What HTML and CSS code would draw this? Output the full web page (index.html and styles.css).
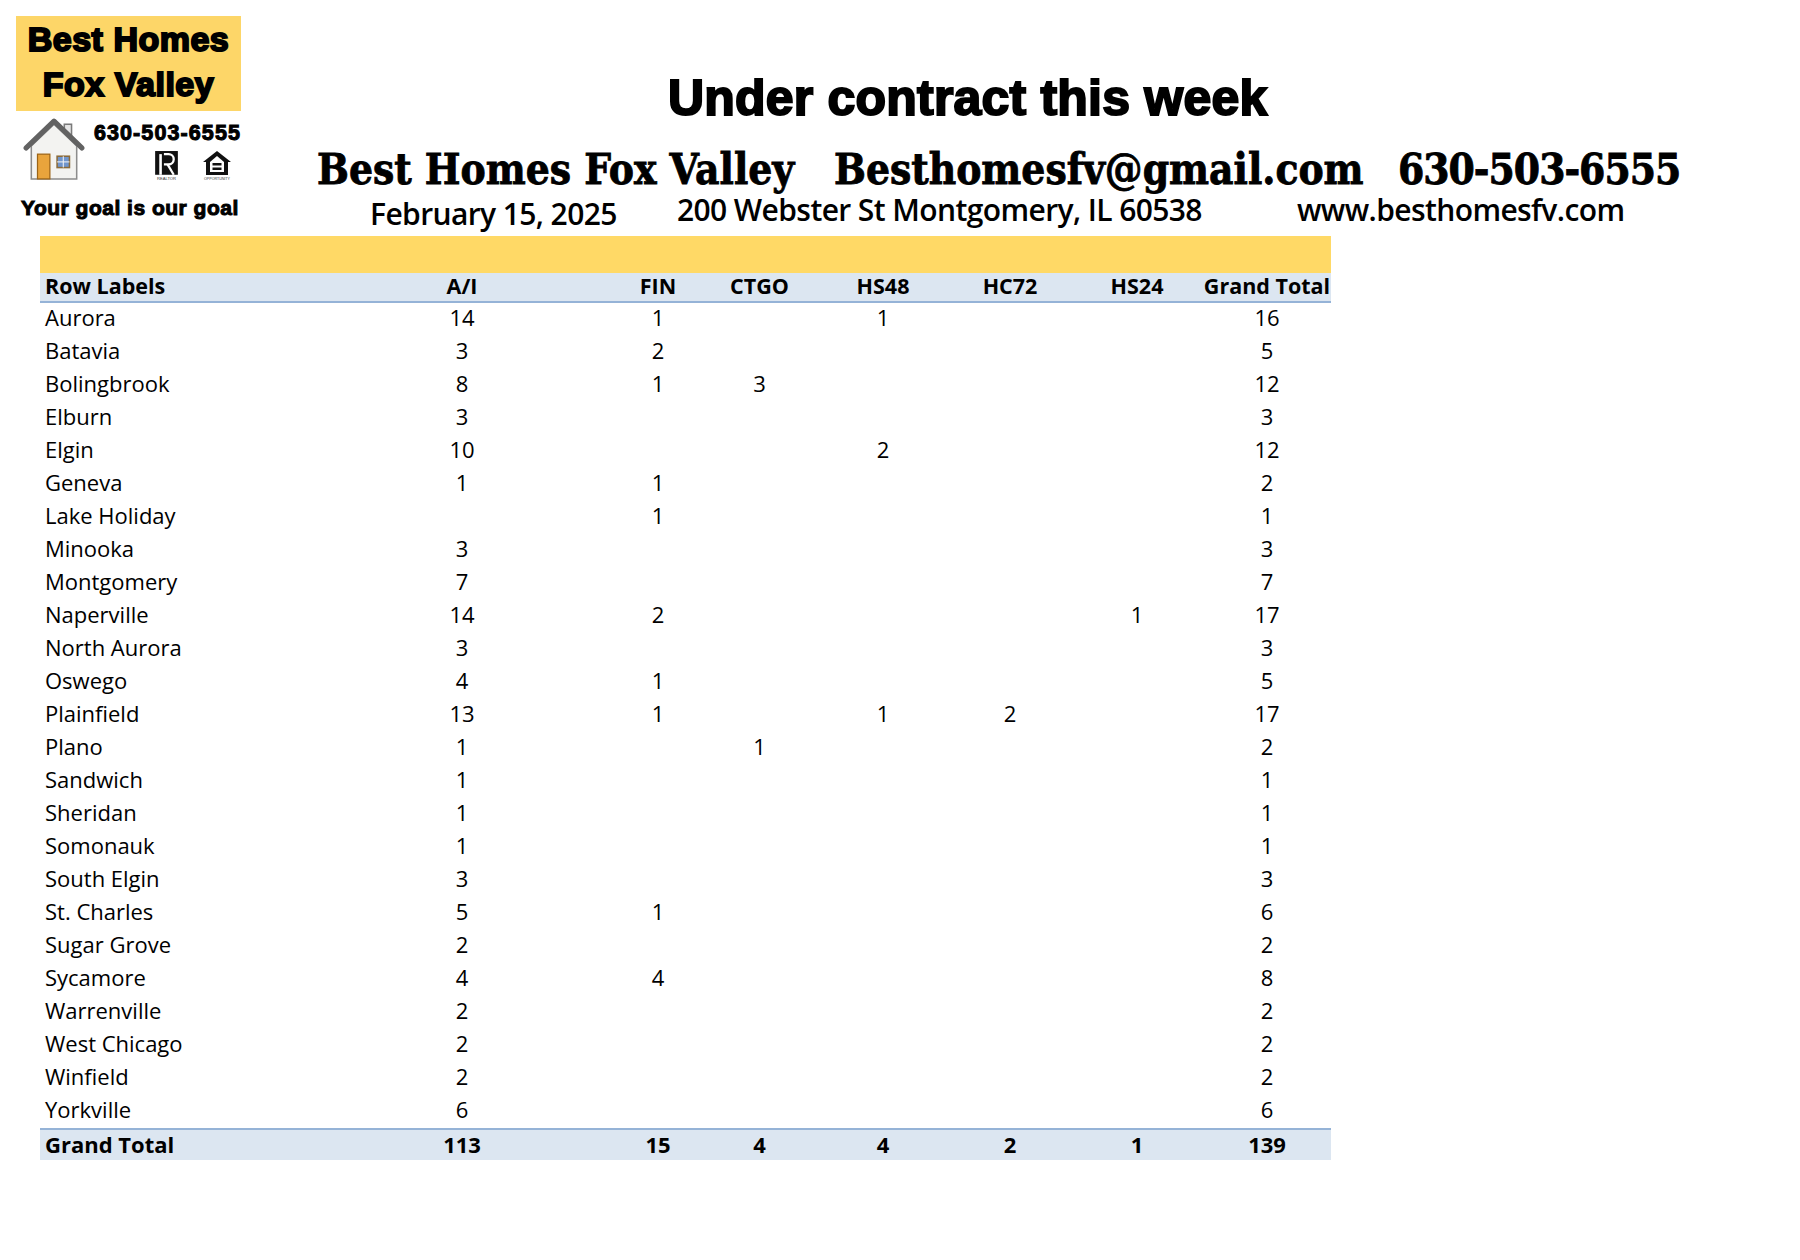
FILE: index.html
```html
<!DOCTYPE html>
<html lang="en">
<head>
<meta charset="utf-8">
<title>Under contract this week</title>
<link rel="stylesheet" href="styles.css">
</head>
<body>
<div class="page">
  <header class="top">
    <div class="logo">
      <div class="logo-box">
        <div class="logo-line">Best Homes</div>
        <div class="logo-line">Fox Valley</div>
      </div>
      <div class="logo-mid">
        <svg class="house" viewBox="0 0 60 64" width="62" height="66" aria-hidden="true">
          <rect x="40" y="8" width="7" height="15" fill="#e6e6e6" stroke="#7a7a7a" stroke-width="1.5"/>
          <polygon points="8,29 30,8 52,29 52,61 8,61" fill="#f3f3f1" stroke="#8c8c8c" stroke-width="1.5"/>
          <polyline points="3,31 30,5 57,31" fill="none" stroke="#626262" stroke-width="5" stroke-linejoin="round" stroke-linecap="round"/>
          <rect x="14" y="37" width="12" height="24" fill="#e9a43c" stroke="#9c6416" stroke-width="1.2"/>
          <rect x="33" y="39" width="12" height="11" fill="#7095cc" stroke="#8a6a3a" stroke-width="1.5"/>
          <line x1="39" y1="39" x2="39" y2="50" stroke="#f4f4f4" stroke-width="1"/>
          <line x1="33" y1="44.5" x2="45" y2="44.5" stroke="#f4f4f4" stroke-width="1"/>
        </svg>
        <div class="logo-right">
          <div class="logo-phone">630-503-6555</div>
          <div class="badges">
            <svg class="badge" viewBox="0 0 26 31" width="27" height="32" aria-hidden="true">
              <rect x="2" y="1" width="22" height="23" fill="#111"/>
              <rect x="6" y="4" width="2.5" height="20" fill="#fff"/>
              <path d="M10.5 4 H15 A5 5 0 0 1 15 14 H10.5" fill="none" stroke="#fff" stroke-width="2.2"/>
              <path d="M14 14 L20 24" stroke="#fff" stroke-width="2.2"/>
              <text x="13" y="29.5" font-size="4" text-anchor="middle" font-family="Liberation Sans, sans-serif" fill="#333">REALTOR</text>
            </svg>
            <svg class="badge" viewBox="0 0 30 31" width="30" height="31" aria-hidden="true">
              <polygon points="15,1 29,12 26,12 26,25 4,25 4,12 1,12" fill="#111"/>
              <polygon points="15,6 22,12 22,22 8,22 8,12" fill="#fff"/>
              <rect x="10.5" y="13" width="9" height="2.5" fill="#111"/>
              <rect x="10.5" y="17.5" width="9" height="2.5" fill="#111"/>
              <text x="15" y="30" font-size="3.6" text-anchor="middle" font-family="Liberation Sans, sans-serif" fill="#333">OPPORTUNITY</text>
            </svg>
          </div>
        </div>
      </div>
      <div class="logo-goal">Your goal is our goal</div>
    </div>
    <div class="heading">
      <h1 class="title">Under contract this week</h1>
      <div class="contact">
        <span class="c-name">Best Homes Fox Valley</span>
        <span class="c-mail">Besthomesfv@gmail.com</span>
        <span class="c-phone">630-503-6555</span>
      </div>
      <div class="subline">
        <span class="s-date">February 15, 2025</span>
        <span class="s-addr">200 Webster St Montgomery, IL 60538</span>
        <span class="s-web">www.besthomesfv.com</span>
      </div>
    </div>
  </header>

  <section class="pivot">
    <div class="band"></div>
    <div class="row head">
      <div class="lbl">Row Labels</div><div>A/I</div><div>FIN</div><div>CTGO</div><div>HS48</div><div>HC72</div><div>HS24</div><div>Grand Total</div>
    </div>
    <div class="row"><div class="lbl">Aurora</div><div>14</div><div>1</div><div></div><div>1</div><div></div><div></div><div>16</div></div>
    <div class="row"><div class="lbl">Batavia</div><div>3</div><div>2</div><div></div><div></div><div></div><div></div><div>5</div></div>
    <div class="row"><div class="lbl">Bolingbrook</div><div>8</div><div>1</div><div>3</div><div></div><div></div><div></div><div>12</div></div>
    <div class="row"><div class="lbl">Elburn</div><div>3</div><div></div><div></div><div></div><div></div><div></div><div>3</div></div>
    <div class="row"><div class="lbl">Elgin</div><div>10</div><div></div><div></div><div>2</div><div></div><div></div><div>12</div></div>
    <div class="row"><div class="lbl">Geneva</div><div>1</div><div>1</div><div></div><div></div><div></div><div></div><div>2</div></div>
    <div class="row"><div class="lbl">Lake Holiday</div><div></div><div>1</div><div></div><div></div><div></div><div></div><div>1</div></div>
    <div class="row"><div class="lbl">Minooka</div><div>3</div><div></div><div></div><div></div><div></div><div></div><div>3</div></div>
    <div class="row"><div class="lbl">Montgomery</div><div>7</div><div></div><div></div><div></div><div></div><div></div><div>7</div></div>
    <div class="row"><div class="lbl">Naperville</div><div>14</div><div>2</div><div></div><div></div><div></div><div>1</div><div>17</div></div>
    <div class="row"><div class="lbl">North Aurora</div><div>3</div><div></div><div></div><div></div><div></div><div></div><div>3</div></div>
    <div class="row"><div class="lbl">Oswego</div><div>4</div><div>1</div><div></div><div></div><div></div><div></div><div>5</div></div>
    <div class="row"><div class="lbl">Plainfield</div><div>13</div><div>1</div><div></div><div>1</div><div>2</div><div></div><div>17</div></div>
    <div class="row"><div class="lbl">Plano</div><div>1</div><div></div><div>1</div><div></div><div></div><div></div><div>2</div></div>
    <div class="row"><div class="lbl">Sandwich</div><div>1</div><div></div><div></div><div></div><div></div><div></div><div>1</div></div>
    <div class="row"><div class="lbl">Sheridan</div><div>1</div><div></div><div></div><div></div><div></div><div></div><div>1</div></div>
    <div class="row"><div class="lbl">Somonauk</div><div>1</div><div></div><div></div><div></div><div></div><div></div><div>1</div></div>
    <div class="row"><div class="lbl">South Elgin</div><div>3</div><div></div><div></div><div></div><div></div><div></div><div>3</div></div>
    <div class="row"><div class="lbl">St. Charles</div><div>5</div><div>1</div><div></div><div></div><div></div><div></div><div>6</div></div>
    <div class="row"><div class="lbl">Sugar Grove</div><div>2</div><div></div><div></div><div></div><div></div><div></div><div>2</div></div>
    <div class="row"><div class="lbl">Sycamore</div><div>4</div><div>4</div><div></div><div></div><div></div><div></div><div>8</div></div>
    <div class="row"><div class="lbl">Warrenville</div><div>2</div><div></div><div></div><div></div><div></div><div></div><div>2</div></div>
    <div class="row"><div class="lbl">West Chicago</div><div>2</div><div></div><div></div><div></div><div></div><div></div><div>2</div></div>
    <div class="row"><div class="lbl">Winfield</div><div>2</div><div></div><div></div><div></div><div></div><div></div><div>2</div></div>
    <div class="row"><div class="lbl">Yorkville</div><div>6</div><div></div><div></div><div></div><div></div><div></div><div>6</div></div>
    <div class="row total"><div class="lbl">Grand Total</div><div>113</div><div>15</div><div>4</div><div>4</div><div>2</div><div>1</div><div>139</div></div>
  </section>
</div>
</body>
</html>
```

FILE: styles.css
```css
* { box-sizing: border-box; }
html, body { margin: 0; padding: 0; background: #ffffff; }
body { width: 1800px; height: 1260px; overflow: hidden; color: #000; font-family: "Open Sans", "Liberation Sans", sans-serif; }
.page { width: 1800px; height: 1260px; }

/* ---------- header ---------- */
.top { display: flex; align-items: flex-start; height: 236px; }

.logo { width: 260px; padding: 16px 0 0 16px; flex: none; }
.logo-box {
  width: 225px; height: 95px; background: #fdd668;
  display: flex; flex-direction: column; align-items: center; justify-content: center;
  padding-bottom: 4px;
}
.logo-line {
  font-family: "Liberation Sans", sans-serif; font-weight: 700; font-size: 34px; line-height: 45px;
  -webkit-text-stroke: 2px #000; letter-spacing: 0.5px; color: #000;
}
.logo-mid { display: flex; align-items: flex-start; margin-top: 5px; height: 66px; }
.house { margin-left: 7px; margin-top: 0; flex: none; }
.logo-right { display: flex; flex-direction: column; align-items: flex-end; width: 153px; }
.logo-phone {
  font-family: "Liberation Sans", sans-serif; font-weight: 700; font-size: 21.5px; line-height: 22px;
  -webkit-text-stroke: 1px #000; letter-spacing: 1.1px; margin-top: 6px; margin-right: -3px;
}
.badges { display: flex; gap: 22px; margin-top: 6px; margin-right: 6px; }
.logo-goal {
  font-family: "Liberation Sans", sans-serif; font-weight: 700; font-size: 21px; line-height: 22px;
  -webkit-text-stroke: 1px #000; letter-spacing: 0.5px; margin: 15px 0 0 5px; white-space: nowrap;
}

.heading { flex: 1; }
.title {
  margin: 73px 0 0 408px; font-family: "Liberation Sans", sans-serif; font-weight: 700;
  font-size: 50px; line-height: 51px; -webkit-text-stroke: 2px #000; letter-spacing: 0.2px; white-space: nowrap;
}
.contact {
  display: flex; margin: 22px 0 0 57px; white-space: nowrap;
  font-family: "DejaVu Serif", "Liberation Serif", serif; font-weight: 700; font-size: 42px; line-height: 48px;
  font-stretch: condensed; -webkit-text-stroke: 0.8px #000;
}
.c-name { width: 517px; }
.c-mail { width: 564px; }
.c-phone { letter-spacing: -1px; }
.subline {
  display: flex; align-items: baseline; margin: -2px 0 0 110px; white-space: nowrap;
  font-family: "Open Sans", sans-serif; font-weight: 600; font-size: 30px; line-height: 36px; letter-spacing: -0.6px;
}
.s-date { width: 307px; position: relative; top: 4px; }
.s-addr { width: 620px; }

/* ---------- pivot table ---------- */
.pivot { width: 1291px; margin-left: 40px; font-size: 22px; }
.band { height: 37px; background: #ffd966; }
.row {
  display: grid;
  grid-template-columns: 270px 304px 88px 115px 132px 122px 132px 128px;
  height: 33px; align-items: center;
}
.row > div { text-align: center; white-space: nowrap; line-height: 29px; padding-bottom: 4px; }
.row > .lbl { text-align: left; padding-left: 5px; }
.head { height: 30px; background: #dce6f1; border-bottom: 2px solid #95b3d7; font-weight: 700; font-size: 21.5px; }
.head > div { line-height: 26px; padding-bottom: 2px; }
.total { height: 32px; background: #dce6f1; border-top: 2px solid #95b3d7; font-weight: 700; }
.total > div { line-height: 28px; padding-bottom: 2px; }
```
